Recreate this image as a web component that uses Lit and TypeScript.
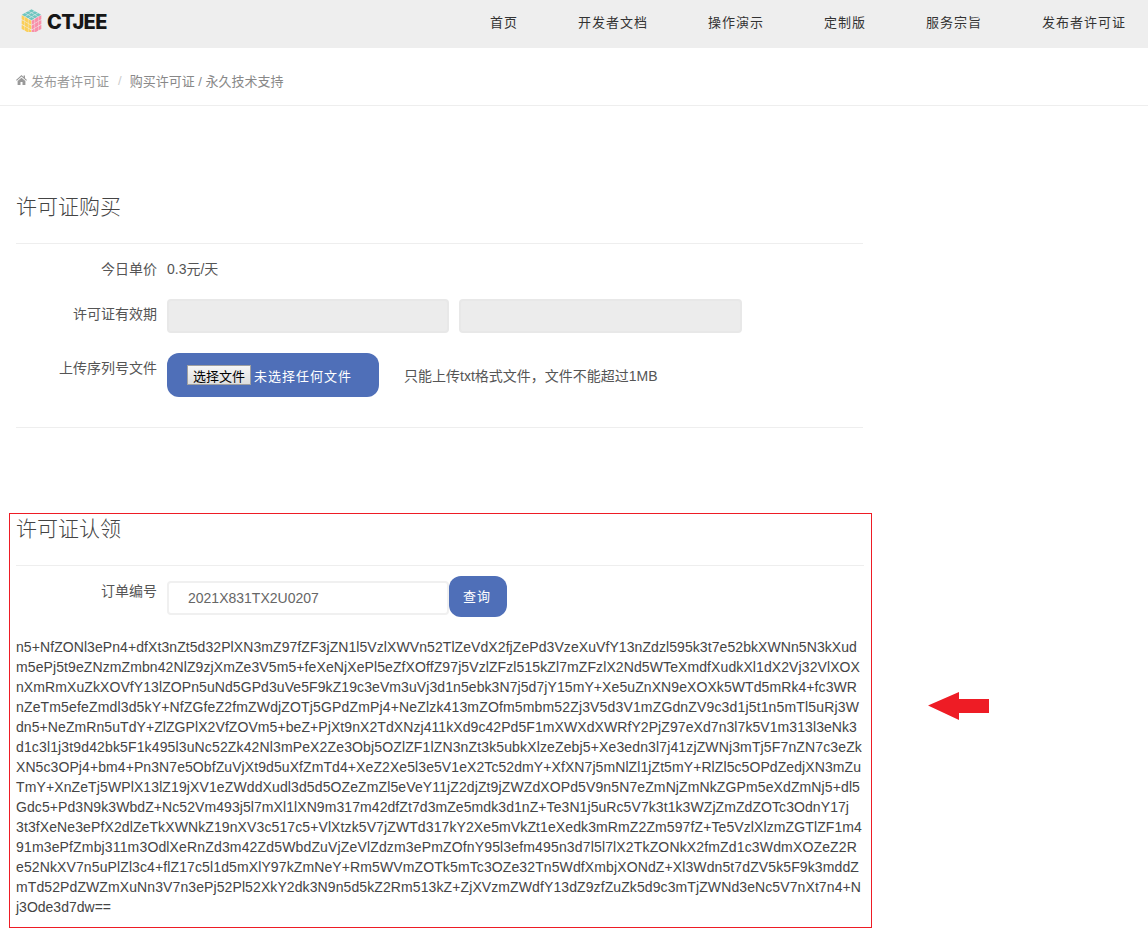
import { LitElement, html, css, svg } from "lit";
import { customElement } from "lit/decorators.js";

const FONT = '14px "Liberation Sans"';

/* Each line of the licence blob with the width it occupies in the reference. */
const LINES: [string, number][] = [
  ["n5+NfZONl3ePn4+dfXt3nZt5d32PlXN3mZ97fZF3jZN1l5VzlXWVn52TlZeVdX2fjZePd3VzeXuVfY13nZdzl595k3t7e52bkXWNn5N3kXud", 841],
  ["m5ePj5t9eZNzmZmbn42NlZ9zjXmZe3V5m5+feXeNjXePl5eZfXOffZ97j5VzlZFzl515kZl7mZFzlX2Nd5WTeXmdfXudkXl1dX2Vj32VlXOX", 844],
  ["nXmRmXuZkXOVfY13lZOPn5uNd5GPd3uVe5F9kZ19c3eVm3uVj3d1n5ebk3N7j5d7jY15mY+Xe5uZnXN9eXOXk5WTd5mRk4+fc3WR", 841],
  ["nZeTm5efeZmdl3d5kY+NfZGfeZ2fmZWdjZOTj5GPdZmPj4+NeZlzk413mZOfm5mbm52Zj3V5d3V1mZGdnZV9c3d1j5t1n5mTl5uRj3W", 843],
  ["dn5+NeZmRn5uTdY+ZlZGPlX2VfZOVm5+beZ+PjXt9nX2TdXNzj411kXd9c42Pd5F1mXWXdXWRfY2PjZ97eXd7n3l7k5V1m313l3eNk3", 841],
  ["d1c3l1j3t9d42bk5F1k495l3uNc52Zk42Nl3mPeX2Ze3Obj5OZlZF1lZN3nZt3k5ubkXlzeZebj5+Xe3edn3l7j41zjZWNj3mTj5F7nZN7c3eZk", 846],
  ["XN5c3OPj4+bm4+Pn3N7e5ObfZuVjXt9d5uXfZmTd4+XeZ2Xe5l3e5V1eX2Tc52dmY+XfXN7j5mNlZl1jZt5mY+RlZl5c5OPdZedjXN3mZu", 845],
  ["TmY+XnZeTj5WPlX13lZ19jXV1eZWddXudl3d5d5OZeZmZl5eVeY11jZ2djZt9jZWZdXOPd5V9n5N7eZmNjZmNkZGPm5eXdZmNj5+dl5", 844],
  ["Gdc5+Pd3N9k3WbdZ+Nc52Vm493j5l7mXl1lXN9m317m42dfZt7d3mZe5mdk3d1nZ+Te3N1j5uRc5V7k3t1k3WZjZmZdZOTc3OdnY17j", 833],
  ["3t3fXeNe3ePfX2dlZeTkXWNkZ19nXV3c517c5+VlXtzk5V7jZWTd317kY2Xe5mVkZt1eXedk3mRmZ2Zm597fZ+Te5VzlXlzmZGTlZF1m4", 846],
  ["91m3ePfZmbj311m3OdlXeRnZd3m42Zd5WbdZuVjZeVlZdzm3ePmZOfnY95l3efm495n3d7l5l7lX2TkZONkX2fmZd1c3WdmXOZeZ2R", 841],
  ["e52NkXV7n5uPlZl3c4+flZ17c5l1d5mXlY97kZmNeY+Rm5WVmZOTk5mTc3OZe32Tn5WdfXmbjXONdZ+Xl3Wdn5t7dZV5k5F9k3mddZ", 843],
  ["mTd52PdZWZmXuNn3V7n3ePj52Pl52XkY2dk3N9n5d5kZ2Rm513kZ+ZjXVzmZWdfY13dZ9zfZuZk5d9c3mTjZWNd3eNc5V7nXt7n4+N", 845],
  ["j3Ode3d7dw==", 95],
];

function spacing(text: string, target: number) {
  const ctx = document.createElement("canvas").getContext("2d");
  if (!ctx) return 0;
  ctx.font = FONT;
  return (target - ctx.measureText(text).width) / text.length;
}

const NAV = ["首页", "开发者文档", "操作演示", "定制版", "服务宗旨", "发布者许可证"];

/* One face of the logo cube: 3x3 cells in a skewed grid. */
function face(ox: number, oy: number, ax: number, ay: number, bx: number, by: number, fill: string) {
  const cells = [];
  for (let i = 0; i < 3; i++) {
    for (let j = 0; j < 3; j++) {
      const p = (u: number, v: number) =>
        `${(ox + (i + u) * ax + (j + v) * bx).toFixed(2)},${(oy + (i + u) * ay + (j + v) * by).toFixed(2)}`;
      cells.push(svg`<polygon points="${p(0.06, 0.06)} ${p(0.94, 0.06)} ${p(0.94, 0.94)} ${p(0.06, 0.94)}" fill="${fill}"></polygon>`);
    }
  }
  return cells;
}

@customElement("app-root")
export class AppRoot extends LitElement {
  static styles = css`
    :host {
      display: block;
      position: relative;
      min-height: 952px;
      background: #fff;
      font-family: "Liberation Sans", "Noto Sans CJK SC", sans-serif;
      font-size: 14px;
      color: #555;
    }
    .topbar {
      height: 48px;
      background: #eee;
      display: flex;
      align-items: center;
      justify-content: space-between;
      padding: 0 22px 0 21px;
    }
    .logo {
      display: flex;
      align-items: center;
      gap: 5px;
      margin-top: -8px;
    }
    .logo svg { display: block; }
    .logo span {
      margin-top: 3px;
      font-family: Inter, sans-serif;
      font-weight: 800;
      font-size: 20px;
      line-height: 24px;
      color: #161616;
      letter-spacing: -0.6px;
    }
    .nav {
      display: flex;
      gap: 60px;
      margin-top: -3px;
    }
    .nav a {
      font-size: 13px;
      letter-spacing: 1px;
      color: #333;
      line-height: 20px;
    }
    .crumbs {
      border-bottom: 1px solid #eee;
      display: flex;
      align-items: center;
      padding: 7px 0 0 16px;
      height: 50px;
      font-size: 13px;
      color: #999;
    }
    .crumbs svg { margin-right: 4px; }
    .crumbs .sep { color: #ccc; margin: 0 8px 0 9px; }
    .crumbs .cur { color: #888; }
    .buy {
      width: 847px;
      margin: 0 0 0 16px;
      padding-top: 86px;
    }
    h2 {
      margin: 0;
      font-family: "Liberation Serif", "Noto Sans CJK SC", serif;
      font-weight: 300;
      font-size: 21px;
      line-height: 30px;
      color: #444;
    }
    .head {
      border-bottom: 1px solid #eee;
    }
    .buy .head { padding-bottom: 21px; }
    .row {
      display: flex;
      align-items: flex-start;
    }
    .label {
      width: 141px;
      margin-right: 10px;
      text-align: right;
      line-height: 20px;
      flex: none;
      color: #555;
    }
    .r1 { padding-top: 15px; height: 20px; }
    .value { line-height: 20px; }
    .r2 { padding-top: 20px; }
    .r2 .label { padding-top: 5px; }
    .ro {
      width: 282px;
      height: 34px;
      box-sizing: border-box;
      background: #ececec;
      border: 2px solid #e8e8e8;
      border-radius: 4px;
    }
    .ro + .ro { margin-left: 10px; width: 283px; }
    .r3 { padding-top: 20px; padding-bottom: 30px; border-bottom: 1px solid #eee; align-items: center; }
    .r3 .label { align-self: flex-start; padding-top: 5px; }
    .upload {
      width: 212px;
      height: 44px;
      background: #4f6fb8;
      border-radius: 12px;
      display: flex;
      align-items: center;
      padding-left: 20px;
      box-sizing: border-box;
      color: #fff;
      font-size: 13px;
      letter-spacing: 1px;
    }
    .upload button {
      width: 64px;
      height: 20px;
      box-sizing: border-box;
      padding: 0 0 2px;
      margin-right: 3px;
      font: inherit;
      letter-spacing: 0;
      color: #000;
      background: linear-gradient(#f6f6f6, #dedede);
      border: 1px solid #a0a0a0;
    }
    .hint { margin-left: 25px; }
    .claim {
      box-sizing: border-box;
      width: 863px;
      height: 415px;
      margin: 85px 0 0 9px;
      border: 1px solid #ee1c25;
      padding: 0 7px 0 6px;
    }
    .claim .head { padding-bottom: 21px; }
    .order { padding-top: 10px; }
    .order .label { padding-top: 5px; }
    .order input {
      width: 282px;
      height: 34px;
      box-sizing: border-box;
      margin-top: 5px;
      padding: 0 0 0 19px;
      font: inherit;
      color: #666;
      background: #fff;
      border: 2px solid #f0f0f0;
      border-radius: 4px;
      outline: none;
    }
    .query {
      width: 58px;
      height: 41px;
      padding: 0 2px 2px 0;
      background: #4f6fb8;
      color: #fff;
      border: 0;
      border-radius: 12px;
      font-family: inherit;
      font-size: 13px;
      letter-spacing: 1px;
    }
    .blob {
      margin-top: 20px;
      line-height: 20px;
      color: #444;
      white-space: nowrap;
    }
    .arrow {
      position: absolute;
      left: 928px;
      top: 692px;
      display: block;
    }
  `;

  render() {
    return html`
      <div class="topbar">
        <div class="logo">
          <svg width="21" height="24" viewBox="0 0 22 24" aria-hidden="true">
            ${face(11, 0.5, 3.5, 2, -3.5, 2, "#6fc6c0")}
            ${face(0.5, 6.5, 3.5, 2, 0, 5, "#fbcf58")}
            ${face(11, 12.5, 3.5, -2, 0, 5, "#f88fa9")}
          </svg>
          <span>CTJEE</span>
        </div>
        <nav class="nav">${NAV.map((n) => html`<a>${n}</a>`)}</nav>
      </div>

      <div class="crumbs">
        <svg width="11" height="10" viewBox="0 0 11 10" aria-hidden="true">
          <path d="M5.5 0 L7.6 1.9 V0.6 H9 V3.2 L11 5 L10.2 5.8 L5.5 1.6 L0.8 5.8 L0 5 Z M5.5 2.7 L9.4 6.1 V10 H6.5 V7 H4.5 V10 H1.6 V6.1 Z" fill="#999"></path>
        </svg>
        <span>发布者许可证</span><span class="sep">/</span>
        <span class="cur">购买许可证 / 永久技术支持</span>
      </div>

      <section class="buy">
        <div class="head"><h2>许可证购买</h2></div>
        <div class="row r1">
          <div class="label">今日单价</div>
          <div class="value">0.3元/天</div>
        </div>
        <div class="row r2">
          <div class="label">许可证有效期</div>
          <div class="ro"></div>
          <div class="ro"></div>
        </div>
        <div class="row r3">
          <div class="label">上传序列号文件</div>
          <div class="upload"><button type="button">选择文件</button>未选择任何文件</div>
          <div class="hint">只能上传txt格式文件，文件不能超过1MB</div>
        </div>
      </section>

      <section class="claim">
        <div class="head"><h2>许可证认领</h2></div>
        <div class="row order">
          <div class="label">订单编号</div>
          <input type="text" .value=${"2021X831TX2U0207"} />
          <button class="query" type="button">查询</button>
        </div>
        <div class="blob">
          ${LINES.map(([t, w]) => html`<div style="letter-spacing:${spacing(t, w).toFixed(3)}px">${t}</div>`)}
        </div>
      </section>

      <svg class="arrow" width="62" height="28" viewBox="0 0 62 28" aria-hidden="true">
        <polygon points="0,13.5 31,0 31,7 61,7 61,21 31,21 31,28" fill="#ee1c25"></polygon>
      </svg>
    `;
  }
}
